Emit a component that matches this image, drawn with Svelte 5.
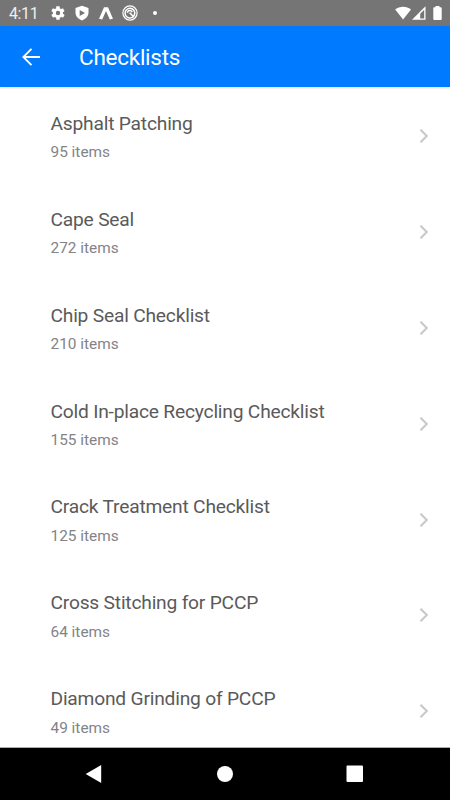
<script lang="ts">
	type Checklist = { name: string; count: number };

	let checklists = $state<Checklist[]>([
		{ name: 'Asphalt Patching', count: 95 },
		{ name: 'Cape Seal', count: 272 },
		{ name: 'Chip Seal Checklist', count: 210 },
		{ name: 'Cold In-place Recycling Checklist', count: 155 },
		{ name: 'Crack Treatment Checklist', count: 125 },
		{ name: 'Cross Stitching for PCCP', count: 64 },
		{ name: 'Diamond Grinding of PCCP', count: 49 }
	]);
</script>

<div class="screen">
	<div class="status-bar">
		<span class="time">4:11</span>
		<div class="notifications">
			<svg width="16" height="16" viewBox="0 0 24 24">
				<path fill="#fff" fill-rule="evenodd" d="M19.4 13c0-.3.1-.6.1-1s0-.7-.1-1l2.1-1.6c.2-.2.2-.4.1-.6l-2-3.5c-.1-.2-.4-.3-.6-.2l-2.5 1c-.5-.4-1.1-.7-1.7-1l-.4-2.6c0-.3-.2-.5-.5-.5h-4c-.2 0-.4.2-.5.4l-.3 2.7c-.7.2-1.2.6-1.8 1l-2.4-1c-.3-.1-.5 0-.7.2l-2 3.5c-.1.2 0 .5.2.6L4.5 11c0 .3-.1.6-.1 1s0 .7.1 1l-2.1 1.6c-.2.2-.3.4-.1.7l2 3.4c.1.2.4.3.6.2l2.5-1c.5.4 1.1.8 1.7 1l.4 2.7c0 .2.2.4.5.4h4c.2 0 .5-.2.5-.4l.4-2.7c.6-.2 1.2-.6 1.7-1l2.5 1c.2.1.5 0 .6-.2l2-3.4c.1-.3.1-.5-.1-.7zM12 15.3a3.3 3.3 0 1 1 0-6.6 3.3 3.3 0 0 1 0 6.6z" />
			</svg>
			<svg width="16" height="16" viewBox="0 0 16 16">
				<path fill="#fff" fill-rule="evenodd" d="M8 .8 1.5 3v4.5c0 3.6 2.6 6.3 6.5 8 3.9-1.7 6.5-4.4 6.5-8V3zM5.7 5v6L11 8z" />
			</svg>
			<svg width="16" height="16" viewBox="0 0 16 16">
				<path fill="#fff" d="M6 2.2h4l5 11.5-3.2.7L8 5.9l-3.8 8.5-3.2-.7z" />
			</svg>
			<svg width="16" height="16" viewBox="0 0 16 16" fill="none" stroke="#fff">
				<circle cx="8" cy="8" r="7.1" stroke-width="1.2" />
				<path d="M11.5 11.6A4.9 4.9 0 1 1 12.8 7.5c0 1.7-.5 2.9-1.3 4.1L7.6 7.7" stroke-width="1.5" />
				<path d="M5.5 7.8c0-2.7 3.8-3.2 4.6-.6" stroke-width="1.5" />
			</svg>
			<span class="dot"></span>
		</div>
		<div class="system">
			<svg width="17" height="14" viewBox="0 0 17 14">
				<path fill="#fff" d="M.2 3.4C4.6-.3 11.6-.3 16 3.4L8.1 13.4z" />
			</svg>
			<svg width="14" height="14" viewBox="0 0 14 14">
				<path fill="#fff" fill-rule="evenodd" d="M13.5.2v13.6H0zM12.2 3.8 8.2 7.8v4.7h4z" />
			</svg>
			<svg class="battery" width="9" height="14" viewBox="0 0 9 14">
				<path fill="#fff" d="M2.5 0h4v1.3h1.3c.5 0 .9.3.9.8v11c0 .5-.4.9-.9.9H1.2c-.5 0-.9-.4-.9-.9v-11c0-.5.4-.8.9-.8h1.3z" />
			</svg>
		</div>
	</div>

	<header class="app-bar">
		<button class="back" aria-label="Back">
			<svg width="18" height="18" viewBox="0 0 18 18" fill="none" stroke="#fff" stroke-width="1.9">
				<path d="M9.5.8 1.3 9l8.2 8.2M1.3 9H18" />
			</svg>
		</button>
		<h1>Checklists</h1>
	</header>

	<main class="list">
		{#each checklists as item (item.name)}
			<div class="row">
				<div class="text">
					<div class="name">{item.name}</div>
					<div class="count">{item.count} items</div>
				</div>
				<svg class="chevron" width="10" height="14" viewBox="0 0 10 14" fill="none" stroke="#c7c7cc" stroke-width="2">
					<path d="m1.5.7 6.3 6.3-6.3 6.3" />
				</svg>
			</div>
		{/each}
	</main>

	<nav class="nav-bar">
		<svg width="18" height="20" viewBox="0 0 18 20"><path fill="#fff" d="M16.2.9v18.2L.7 10z" /></svg>
		<svg width="18" height="18" viewBox="0 0 18 18"><circle cx="9" cy="9" r="8" fill="#fff" /></svg>
		<svg width="18" height="18" viewBox="0 0 18 18"><rect x=".5" y=".5" width="16.5" height="16.5" rx="1" fill="#fff" /></svg>
	</nav>
</div>

<style>
	.screen {
		display: flex;
		flex-direction: column;
		width: 450px;
		height: 800px;
		overflow: hidden;
		background: #fff;
		font-family: Roboto, 'Liberation Sans', sans-serif;
	}

	.status-bar {
		flex: none;
		display: flex;
		align-items: center;
		height: 26px;
		padding: 0 8px 0 9px;
		background: #757575;
		color: #fff;
	}
	.time { width: 41px; font-size: 16px; line-height: 26px; padding-top: 2px; letter-spacing: -0.4px; color: #eee; }
	.notifications { display: flex; align-items: center; gap: 8px; }
	.dot { width: 4px; height: 4px; margin-left: 7px; border-radius: 50%; background: #fff; }
	.system { display: flex; align-items: center; margin-left: auto; }
	.battery { margin-left: 7px; }

	.app-bar {
		flex: none;
		display: flex;
		align-items: center;
		box-sizing: border-box;
		height: 61px;
		padding-left: 22px;
		background: #007aff;
		color: #fff;
		box-shadow: 0 1px 2px rgba(0, 0, 0, 0.15);
	}
	.back { display: flex; width: 57px; padding: 0; border: none; background: none; }
	h1 { margin: 1px 0 0; font-size: 22.5px; font-weight: 400; line-height: 28px; letter-spacing: -0.25px; }

	.list { flex: 1; min-height: 0; padding-top: 1px; overflow: hidden; }
	.row {
		display: flex;
		align-items: center;
		justify-content: space-between;
		height: 95.9px;
		padding: 0 21px 0 50.5px;
	}
	.name { padding-top: 2.4px; font-size: 19.2px; font-weight: 400; line-height: 24px; letter-spacing: -0.2px; color: #5a5a5a; }
	.count { margin-top: 6.6px; font-size: 15.4px; font-weight: 400; line-height: 20px; color: #838388; }

	.nav-bar {
		flex: none;
		display: flex;
		align-items: center;
		justify-content: space-between;
		box-sizing: border-box;
		height: 53px;
		padding: 0 86px 0 85px;
		border-top: 1px solid #aaa;
		background: #000;
	}
</style>
